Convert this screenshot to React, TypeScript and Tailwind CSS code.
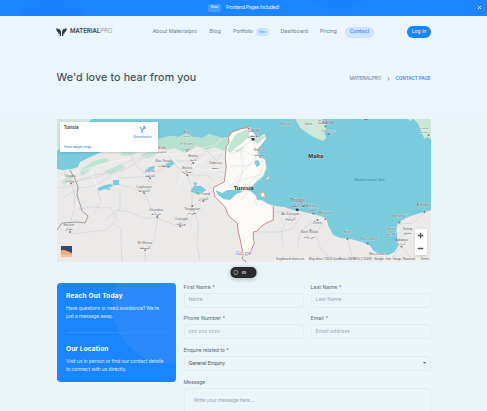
import React from 'react';

type Label = { x: number; y: number; t: string; ar?: string; s?: number; w?: number; c?: string };

const labels: Label[] = [
  { x: 253, y: 132.3, t: 'Tunis', ar: 'تونس', s: 5, w: 12 },
  { x: 187, y: 133, t: 'Annaba', ar: 'عنابة', s: 3, w: 7 },
  { x: 187, y: 145.5, t: 'El Eulma', ar: 'العلمة', s: 3.4, w: 14, c: '#7a8583' },
  { x: 193, y: 157, t: 'Batna', ar: 'باتنة', s: 4, w: 10 },
  { x: 187, y: 169, t: 'Biskra', ar: 'بسكرة', s: 4, w: 10 },
  { x: 215, y: 164.5, t: 'Tebessa', ar: 'تبسة', s: 3.7, w: 13 },
  { x: 259, y: 151.5, t: 'Sousse', ar: 'سوسة', s: 3.7, w: 11 },
  { x: 164, y: 162.5, t: 'Bou Saada', ar: 'بوسعادة', s: 4, w: 17 },
  { x: 162, y: 149, t: 'Blida', ar: 'البليدة', s: 3.6, w: 8 },
  { x: 150, y: 172.5, t: 'Djelfa', ar: 'الجلفة', s: 4, w: 9 },
  { x: 144, y: 188, t: 'Laghouat', ar: 'الأغواط', s: 4, w: 15 },
  { x: 70, y: 177.5, t: 'Oujda', ar: 'وجدة', s: 4, w: 11 },
  { x: 69, y: 226, t: 'Bechar', ar: 'بشار', s: 4, w: 11 },
  { x: 156, y: 211, t: 'Ghardaia', ar: 'غرداية', s: 4, w: 14 },
  { x: 145, y: 244.5, t: 'El Menia', ar: 'المنيعة', s: 4, w: 14 },
  { x: 203, y: 195.5, t: 'El Oued', ar: 'الوادي', s: 4, w: 13 },
  { x: 192, y: 210, t: 'Touggourt', ar: 'تقرت', s: 4, w: 16 },
  { x: 181, y: 220.5, t: 'Ouargla', ar: 'ورقلة', s: 4, w: 13 },
  { x: 297, y: 202.5, t: 'Tripoli', ar: 'طرابلس', s: 5, w: 15 },
  { x: 290, y: 215.5, t: 'Az Zawiyah', ar: 'الزاوية', s: 4, w: 18 },
  { x: 312, y: 207, t: 'Al Khums', ar: 'الخمس', s: 3.7, w: 12 },
  { x: 325, y: 214, t: 'Misrata', s: 4.1, w: 13 },
  { x: 317, y: 224.5, t: 'Zliten', s: 3.9, w: 9 },
  { x: 309, y: 233.5, t: 'Bani Walid', ar: 'بني وليد', s: 3.7, w: 16 },
  { x: 347, y: 233.5, t: 'Sirte', s: 3.9, w: 8 },
  { x: 369, y: 240.5, t: 'Ras Lanuf', s: 3.6, w: 17 },
  { x: 376, y: 255, t: 'Marj Lanuf', s: 3.6, w: 15 },
  { x: 399, y: 217.5, t: 'Benghazi', s: 3.9, w: 14 },
  { x: 390, y: 230.5, t: 'Qaminis', ar: 'قمينس', s: 3.5, w: 12 },
  { x: 407, y: 230, t: 'Suluq', ar: 'سلوق', s: 3.5, w: 9 },
  { x: 401, y: 241, t: 'Ajdabiya', ar: 'أجدابيا', s: 3.5, w: 13 },
  { x: 422.5, y: 206.5, t: 'Al Bayda', s: 3.8, w: 13 },
  { x: 308, y: 124.7, t: 'Gela', s: 3.4, w: 8 },
  { x: 325.5, y: 124.2, t: 'Catania', s: 4.6, w: 15 },
  { x: 328, y: 132, t: 'Syracuse', s: 3.6, w: 14, c: '#77869a' },
  { x: 286, y: 124.7, t: 'Marsala', s: 3.7, w: 12 },
  { x: 423.5, y: 129.5, t: 'Kalamata', s: 2.5, w: 9 },
  { x: 423.5, y: 133.2, t: 'Καλαμάτα', s: 2.5, w: 9 },
];

const dots: [number, number][] = [
  [193, 163], [187, 175], [150, 178], [144, 193], [157, 217], [145, 250], [192, 206], [180, 226], [70, 232],
  [71, 183], [203, 201], [325, 219], [317, 220], [310, 230], [347, 239], [399, 222.5], [424, 212], [325, 126.5],
  [328, 134], [260, 157], [313, 213.5], [401, 246.5], [367, 243.5], [187, 150.5], [428, 135],
];

const coast =
  'M57 169 63 170 72 169 78 167 80 162 88 158 97 154 104 151 115 147 133 142 158 139 170 136 178 137 186 134 193 137 202 138 209 134 215 136 222 138 228 137 232 132 240 129 250 127 251 131 258 138 264 134 266 138 261 145 257 149 258 155 265 160 266 168 263 176 257 181 252 186 246 190 250 191 255 195 257 200 261 200 268 204 275 206 284 207 292 210 300 211 312 214 320 216 326 218 328 226 333 235 340 238 350 239 362 242 370 246 373 251 380 254 388 255 394 252 398 246 397 238 396 230 397 224 402 220 410 216 420 213 431 210V262H57Z';

const tunisia =
  'M228 137 232 132 240 129 250 127 251 131 258 138 264 134 266 138 261 145 257 149 258 155 265 160 266 168 263 176 257 181 252 186 246 190 250 191 255 195 257 200 261 200 268 204 273 206 273 220 266 223 260 227 257 231 253 232 253 238 254 243 250 253 243 255 242 250 240 240 238 232 237 223 232 219 228 215 225 207 215 197 213 190 214 187 224 182 226 167 225 157 226 147 229 142Z';

function Map() {
  return (
    <svg viewBox="57 119 373.5 142.5" className="h-full w-full" preserveAspectRatio="none" fontFamily="'Liberation Sans','DejaVu Sans',sans-serif">
      <rect x="57" y="119" width="374" height="143" fill="#7acbdc" />
      <path d="M57 119H92L86 124 70 140 57 151Z" fill="#d3e8df" />
      <path d={coast} fill="#ebeae8" />
      <g fill="#b4e1d0">
        <path d="M133 142 158 139 170 136 178 137 186 134 193 137 202 138 209 134 215 136 222 138 228 137 229 145 224 151 214 147 206 150 197 146 185 153 174 148 166 150 158 145 146 149Z" />
        <path d="M120 152 132 147 142 149 133 155 122 156ZM79 171 93 161 105 158 110 161 96 165 82 176ZM105 171 121 164 125 167 110 175ZM62 181 72 174 74 177 64 185ZM140 156 152 149 160 152 147 159Z" opacity=".75" />
      </g>
      <g fill="none" stroke="#fff" strokeWidth="1.1" opacity=".45">
        <path d="M60 178 90 168 120 160 150 156 190 153 225 153M180 160 195 150 215 145 222 139M165 150 177 164 205 170 224 169M90 168 98 190M175 190 187 170 210 155" />
      </g>
      <g fill="none" stroke="#d3d1da" strokeWidth=".65">
        <path d="M63 170 71 183 75 195 74 210 69 228M64 197 80 188 94 186 108 178 117 166 136 158 155 156M71 183 94 175 122 171 142 159M78 209 91 207 111 208 117 219 107 230 88 232 70 234M109 191 118 178 137 177 150 177 144 193 150 207 158 217 153 244 145 250 145 262M94 213 101 201 97 190 113 183 128 187 145 193M150 177 164 167 176 161 193 161M150 177 136 166 129 153M105 220 117 210 130 212 142 218 157 218 170 223 181 228 192 206 203 201 213 191M113 224 121 229 121 242 122 262M192 206 198 222 197 245 200 262M187 175 192 190 192 206M187 175 206 175 213 180M120 190 120 208 114 218M167 154 176 166 187 175 193 161 207 151 217 161 222 153M57 188 67 187 81 180 98 177 109 171 124 170" />
        <path d="M257 207 255 217 258 227M255 227 251 244M267 213 290 211M301 216 292 229 279 232 259 232M325 220 315 234 321 250 336 262M347 239 350 250 353 262M401 246 408 255 415 262M401 246 388 262M399 224 412 223 424 213M290 213 281 231 283 246M315 220 300 231 297 246" />
      </g>
      <g fill="none" stroke="#8e8b89" strokeWidth=".8">
        <path d="M70 170 75 179 78 187 77 195 80 204 82 211 88 216 85 223 77 222 62 223 57 230" />
        <path d="M243 255 242 259 246 262" />
      </g>
      <g fill="#7acbdc">
        <path d="M97 188 105 185 111 184 113 186 105 189 99 191ZM113 180h6v5h-6ZM144 173 149 167 155 166 154 169ZM163 166 171 161 175 163 169 168ZM190 191 194 186 201 186 206 190 200 194 194 193ZM193 182 197 183 195 187ZM100 188 109 188 111 190Z" />
      </g>
      <path d={tunisia} fill="#fbfaf7" />
      <path d="M229 145 235 135 246 129 250 131 248 137 242 143 236 147 230 153 227 151ZM253 140 264 135 265 137 257 144ZM235 151 244 146 243 148 236 153Z" fill="#c1e5d3" />
      <g fill="none" stroke="#dcdde8" strokeWidth=".6">
        <path d="M231 154 240 149 252 139 256 149 263 162 260 174 248 184M230 166 242 166 263 162M234 180 245 170 256 157 245 151 230 150M228 186 242 180 263 174M240 149 243 168 238 185 235 193M254 197 257 206M248 190 240 201" />
      </g>
      <path d="M215 190 222 193 227 190 235 190 240 188 242 192 236 194 230 200 223 199 218 195ZM254 161 258 160 260 165 256 167ZM232 192 240 189 241 192ZM248 190 253 187 255 193Z" fill="#78cbe0" />
      <path d="M228 137 232 132 240 129 250 127M228 137 229 142 226 147 225 157 226 167 224 182 214 187 213 190 215 197 225 207 228 215 232 219 237 223 238 232 240 240 242 250 243 255M273 206 273 220 266 223 260 227 257 231 253 232 253 238 254 243 250 253" fill="none" stroke="#c07c77" strokeWidth=".85" />
      <path d="M264 134 266 138 261 145 257 149 258 155 265 160 266 168 263 176 257 181 252 186 246 190 250 191 255 195 257 200 261 200 268 204 273 206" fill="none" stroke="#d8c4cb" strokeWidth=".5" />
      <path d="M260 193 264 192 265 197 261 197ZM265 179 269 176 270 177 267 180Z" fill="#f5efee" stroke="#c08a88" strokeWidth=".5" />
      <path d="M295 119 300 128 308 134 315 138 323 141 326 138 324 133 326 128 322 119Z" fill="#cde8d8" />
      <path d="M413 119 418 124 421 132 424 139 427 137 431 140V119Z" fill="#cde8d8" />
      <path d="M407 119h5l-2 2Z" fill="#cde8d8" />
      <g fill="#777">
        {dots.map(([x, y], i) => <rect key={i} x={x - 0.8} y={y - 0.8} width="1.7" height="1.7" />)}
        <rect x="251.3" y="138" width="3" height="2.5" fill="#333" />
        <rect x="295.5" y="208.7" width="2.7" height="2.2" fill="#333" />
        <rect x="364" y="119" width="3" height="1" />
      </g>
      <g textAnchor="middle" stroke="#fff" strokeWidth=".6" strokeOpacity=".6" paintOrder="stroke">
        {labels.map((l, i) => (
          <g key={i} fill={l.c ?? '#5c6065'}>
            <text x={l.x} y={l.y} fontSize={l.s} textLength={l.w} lengthAdjust="spacingAndGlyphs">{l.t}</text>
            {l.ar && <text x={l.x} y={l.y + 4.5} fontSize={(l.s ?? 3.5) * 0.95}>{l.ar}</text>}
          </g>
        ))}
      </g>
      <g fontWeight="700" fill="#202124" stroke="#fff" strokeWidth=".6" strokeOpacity=".7" paintOrder="stroke">
        <text x="233.5" y="190" fontSize="6" textLength="20" lengthAdjust="spacingAndGlyphs">Tunisia</text>
        <text x="308" y="158" fontSize="6" textLength="15" lengthAdjust="spacingAndGlyphs">Malta</text>
      </g>
      <text x="354" y="181" fontSize="3.6" fill="#398ea7" textLength="30" lengthAdjust="spacingAndGlyphs">Mediterranean Sea</text>
      <g fontSize="6" fontWeight="500" stroke="#fff" strokeWidth=".5" paintOrder="stroke">
        <text x="235.5" y="255" textLength="15.5" lengthAdjust="spacingAndGlyphs">
          <tspan fill="#4285f4">G</tspan><tspan fill="#ea4335">o</tspan><tspan fill="#fbbc04">o</tspan><tspan fill="#4285f4">g</tspan><tspan fill="#34a853">l</tspan><tspan fill="#ea4335">e</tspan>
        </text>
      </g>
      <rect x="275" y="257.4" width="156" height="4.2" fill="#f4f4f3" opacity=".8" />
      <g fontSize="3.1" fill="#555">
        <text x="276" y="260.5" textLength="28" lengthAdjust="spacingAndGlyphs">Keyboard shortcuts</text>
        <text x="308.5" y="260.5" textLength="106" lengthAdjust="spacingAndGlyphs">Map data ©2024 GeoBasis-DE/BKG (©2009), Google, Inst. Geogr. Nacional</text>
        <text x="420" y="260.5" textLength="8.5" lengthAdjust="spacingAndGlyphs">Terms</text>
      </g>
    </svg>
  );
}

function Field({ label, hint }: { label: string; hint: string }) {
  return (
    <label className="flex min-w-0 flex-1 flex-col">
      <span className="h-[9px] text-[5.2px] leading-[7px] tracking-[0.07px] text-[#5d6b7a]">{label}</span>
      <span className="flex h-[15px] items-center rounded-[3px] border border-[#e1ebf1] px-[4px] text-[5px] tracking-[0.1px] text-[#9aa9b7]">{hint}</span>
    </label>
  );
}

export default function App() {
  return (
    <div className="h-[411px] w-[487px] overflow-hidden bg-[#ebf4f8] font-['Inter','Open_Sans',sans-serif] text-[#3a4752]">
      <div className="flex h-[176px] flex-col bg-linear-to-b from-[#ebf5fe] from-60% to-[#ebf4f8] to-70%">
        <div className="flex h-[15.5px] shrink-0 items-center overflow-hidden bg-[#1b84ff] bg-[radial-gradient(circle_at_52px_42px,#1a82fa_0_43px,transparent_44px),radial-gradient(circle_at_338px_-34px,#1a82fa_0_43px,transparent_44px)] pl-[208px] pr-[5px] text-[5px] text-white">
          <span className="flex h-[8px] w-[13px] items-center justify-center rounded-[2px] bg-[#459bff] text-[3.5px]">New</span>
          <span className="ml-[5px] whitespace-nowrap tracking-[-0.3px] text-[#e6f1ff]">Frontend Pages Included!</span>
          <svg className="ml-auto size-[5px]" viewBox="0 0 5 5"><path d="M1 1 4 4M4 1 1 4" stroke="white" strokeWidth=".8" /></svg>
        </div>

        <header className="flex h-[33px] shrink-0 items-center whitespace-nowrap pl-[56px] pr-[56px] text-[5.3px] text-[#727f8e]">
          <svg className="h-[9px] w-[11px]" viewBox="0 0 11 9" fill="#333b43">
            <path d="M0 .5C2.4.3 4.8 1.1 5 3.8V8H3.7V5.9L2.3 5.5V4.2L1 3.4ZM11 .5C8.6.3 6.2 1.1 6 3.8V8H7.3V5.9L8.7 5.5V4.2L10 3.4Z" />
          </svg>
          <span className="ml-[3px] w-[42px] font-[Roboto] text-[6.3px] font-bold tracking-[-0.03px] text-[#4a535c]">MATERIAL<span className="font-light text-[#7b8792]">PRO</span></span>
          <nav className="ml-[40.5px] flex items-center">
            <span className="w-[57px] tracking-[-0.03px]">About Materialpro</span>
            <span className="w-[23.5px]">Blog</span>
            <span className="w-[23px] tracking-[-0.12px]">Portfolio</span>
            <span className="flex h-[8px] w-[13px] items-center justify-center rounded-[3px] bg-[#cde4fd] text-[3.3px] text-[#4b9bf8]">New</span>
            <span className="ml-[11.5px] w-[39.5px] tracking-[0.03px]">Dashboard</span>
            <span className="w-[25px] tracking-[-0.1px]">Pricing</span>
            <span className="flex h-[11px] w-[29px] items-center justify-center rounded-full bg-[#cfe4fc] text-[5.2px] font-medium text-[#328ef8]">Contact</span>
          </nav>
          <span className="ml-auto flex h-[12px] w-[24px] items-center justify-center rounded-full bg-[#1b84ff] text-[5px] text-white">Log In</span>
        </header>

        <div className="flex h-[60px] items-center justify-between px-[56.5px]">
          <h1 className="text-[10.8px] tracking-[0.09px] text-[#3a4752] [-webkit-text-stroke:.1px_#3a4752]">We'd love to hear from you</h1>
          <div className="flex items-center whitespace-nowrap text-[4.8px]">
            <span className="w-[37px] tracking-[-0.18px] text-[#70808f]">MATERIALPRO</span>
            <svg className="mr-[6px] h-[4px] w-[3px]" viewBox="0 0 3 4" fill="none" stroke="#56616d" strokeWidth=".65"><path d="m.7.4 1.6 1.6L.7 3.6" /></svg>
            <span className="w-[35px] text-[4.7px] font-semibold tracking-[-0.12px] text-[#3991fa]">CONTACT PAGE</span>
          </div>
        </div>
      </div>

      <main className="-mt-[57px] px-[56.5px]">
        <section className="relative h-[142.5px] overflow-hidden rounded-[3px]">
          <Map />
          <div className="absolute left-[3.2px] top-[3px] flex h-[30px] w-[98px] flex-col justify-between bg-white px-[4px] pb-[2px] pt-[3px] font-['Roboto'] shadow-sm">
            <span className="text-[4.5px] leading-[6px] font-medium tracking-[0.02px] text-[#333]">Tunisia</span>
            <span className="text-[4.1px] leading-[6px] tracking-[-0.13px] text-[#3685e8]">View larger map</span>
            <span className="absolute right-[6px] top-[4px] flex flex-col items-center text-[4.1px] leading-[6px] text-[#3685e8]">
              <svg className="size-[7px]" viewBox="0 0 7 7" fill="none" stroke="#3685e8" strokeWidth="1"><path d="M3 7V4.4L5.4 1.6M4 .8h2v2.2M1 .8l1.6 3" /></svg>
              <span className="mt-[1px]">Directions</span>
            </span>
          </div>
          <div className="absolute bottom-[4px] left-[3px] size-[13px] rounded-[2px] border-[.6px] border-[#f4e4da]">
            <svg viewBox="0 0 12 12" className="size-full"><path d="M0 0H12V12H0Z" fill="#34486f" /><path d="M0 5 3 4 8 6 12 8V12H0Z" fill="#efad7f" /><path d="M0 9 5 10 12 9.5V12H0Z" fill="#f3c4a2" /></svg>
          </div>
          <div className="absolute bottom-[7px] right-[3.5px] flex h-[26px] w-[12.5px] flex-col items-center justify-around bg-white shadow-sm">
            <svg className="h-[22px] w-[7px]" viewBox="0 0 7 22" stroke="#555" strokeWidth="1.3"><path d="M.7 4.5h5.6M3.5 1.7v5.6M.7 17.5h5.6" /></svg>
          </div>
        </section>

        <div className="mx-auto mt-[5.5px] flex h-[11px] w-[26px] translate-x-[-.5px] items-center gap-[3px] rounded-[5px] bg-[#292b2d] px-[3px] shadow-[0_1px_5px_#0004]">
          <svg className="size-[5px]" viewBox="0 0 5 5" fill="none" stroke="#d6d6d6" strokeWidth=".65"><path d="M1 4.3C-1 1.6 1.2.4 2.5.5 5 .5 5.2 4.2 2.5 4.3Z" /></svg>
          <svg className="h-[5px] w-[5px]" viewBox="0 0 5 5"><rect y="1" width="5" height="3" rx="1.3" fill="#999" /><path d="M1.7 1.7v1.6M3.3 1.7v1.6" stroke="#333" strokeWidth=".5" /></svg>
        </div>

        <section className="mt-[5px] flex items-start gap-[7.5px]">
          <aside className="h-[99px] w-[119.5px] shrink-0 rounded-[4px] bg-[#1b84ff] bg-[radial-gradient(circle_at_113px_23px,#2a89fd_0_57px,transparent_58px)] px-[9.5px] pt-[9px] text-white">
            <h2 className="whitespace-nowrap text-[6.5px] leading-[9px] font-bold tracking-[0.2px]">Reach Out Today</h2>
            <p className="mt-[4px] whitespace-nowrap text-[5px] leading-[7.7px] tracking-[-0.18px] text-[#d8eaff]">Have questions or need assistance? We're<br />just a message away.</p>
            <div className="mt-[11.5px] h-px w-[100px] bg-[#3590ff]" />
            <h2 className="mt-[12px] whitespace-nowrap text-[6.5px] leading-[9px] font-bold tracking-[0.15px]">Our Location</h2>
            <p className="mt-[4px] whitespace-nowrap text-[5px] leading-[7.7px] tracking-[-0.12px] text-[#d8eaff]">Visit us in person or find our contact details<br />to connect with us directly.</p>
          </aside>

          <form className="flex min-w-0 flex-1 flex-col gap-[7.7px] pt-[.5px]">
            <div className="flex gap-[7px]"><Field label="First Name *" hint="Name" /><Field label="Last Name *" hint="Last Name" /></div>
            <div className="flex gap-[7px]"><Field label="Phone Number *" hint="xxx xxx xxxx" /><Field label="Email *" hint="Email address" /></div>
            <div className="flex flex-col">
              <span className="h-[9px] text-[5.2px] leading-[7px] tracking-[-0.1px] text-[#5d6b7a]">Enquire related to *</span>
              <span className="flex h-[15px] items-center justify-between rounded-[3px] border border-[#e1ebf1] px-[4px] text-[5px] tracking-[-0.08px] text-[#43515e]">General Enquiry
                <svg className="h-[2px] w-[3px]" viewBox="0 0 3 2"><path d="M0 0h3L1.5 1.8Z" fill="#47535e" /></svg>
              </span>
            </div>
            <div className="flex flex-col">
              <span className="h-[9px] text-[5.2px] leading-[7px] tracking-[-0.13px] text-[#5d6b7a]">Message</span>
              <span className="h-[60px] rounded-[3px] border border-[#e1ebf1] px-[9px] pt-[8px] text-[5px] leading-[7px] tracking-[-0.12px] text-[#9aa9b7]">Write your message here...</span>
            </div>
          </form>
        </section>
      </main>
    </div>
  );
}
